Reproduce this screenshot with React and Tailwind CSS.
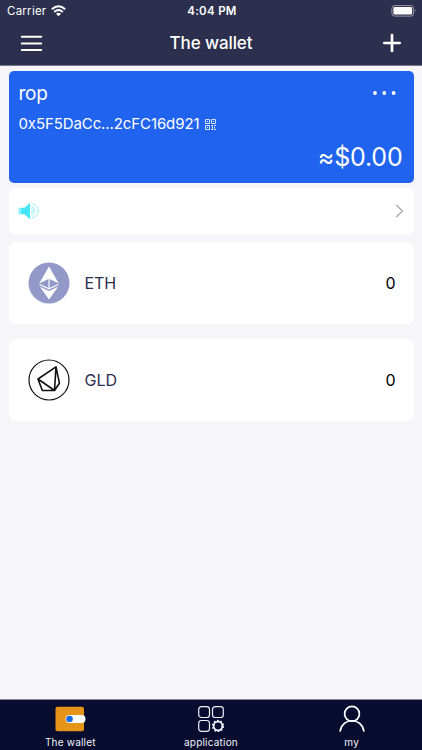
const EthIcon = () => (
  <svg width="42" height="42" viewBox="0 0 42 42">
    <circle cx="21" cy="21" r="20.5" fill="#9299c9" />
    <path d="M21 4.5 30.8 21.5 21 16.8 11.2 21.5Z" fill="#fff" />
    <path d="M13 22.2 21 18.2 29 22.2 21 25.8Z" fill="#9299c9" />
    <path d="M11.6 22.6 21 26.8 30.4 22.6" fill="none" stroke="#fff" strokeWidth="1.1" />
    <path d="M21 17V27" stroke="#fff" strokeWidth="1.1" />
    <path d="M11.8 24.8 21 29 30.2 24.8 21 37.5Z" fill="#fff" />
  </svg>
);

const GldIcon = () => (
  <svg width="42" height="42" viewBox="0 0 42 42" fill="none" stroke="#111" strokeLinejoin="round">
    <circle cx="21" cy="21" r="20" strokeWidth="1.2" />
    <path d="M10 20 28 7.8 31.4 24.2 26.5 31.5H14.3ZM10 20 26.5 31.5 28 7.8" strokeWidth="1.6" />
  </svg>
);

const SpeakerIcon = () => (
  <svg width="22" height="18" viewBox="0 0 22 18" fill="none">
    <path d="M0.5 5.8h2v6.4h-2z" fill="#7befff" />
    <path d="M2.8 5.8h3.7L12 .8v16.4L6.5 12.2H2.8Z" fill="#45e6fa" />
    <g stroke="#8ff1ff" strokeWidth="1">
      <path d="M13.5 6.5q2 2.5 0 5" />
      <path d="M13.5 4q6 5 0 10" />
      <path d="M13.5 1.7c9 1.8 9 12.8 0 14.6" />
    </g>
  </svg>
);

const QrIcon = () => (
  <svg className="mb-px" width="11" height="11" viewBox="0 0 11 11" fill="none" stroke="#d5e2ff" strokeWidth="1">
    <path d="M.5.5h4v4h-4zM6.5.5h4v4h-4zM.5 6.5h4v4h-4zM2 2.5h1M8 2.5h1M2 8.5h1M6 6.5h2M9 6.5h2M7.5 7v3M6 10.5h2M9.5 8v1.5M9 10.5h2" />
  </svg>
);

const AppsIcon = () => (
  <svg width="26" height="26" viewBox="0 0 26 26" fill="none" stroke="#eef0fa" strokeWidth="1.2">
    <rect x=".7" y=".7" width="10.8" height="10.8" rx="2.8" />
    <rect x="14.5" y=".7" width="10.8" height="10.8" rx="2.8" />
    <rect x=".7" y="14.5" width="10.8" height="10.8" rx="2.8" />
    <circle cx="20" cy="20" r="4.3" strokeWidth="1.8" />
    <circle cx="20" cy="20" r="5.5" strokeWidth="1.3" strokeDasharray="1.9 1.556" />
  </svg>
);

const Token = ({ icon, name }) => (
  <div className="flex h-[82px] items-center rounded-lg bg-white pl-[19px] pr-[18px]">
    {icon}
    <span className="ml-[15px] text-[16px] tracking-[-0.05px] text-[#2c2f4d]">{name}</span>
    <span className="ml-auto pt-px text-[16px] text-black">0</span>
  </div>
);

const Tab = ({ icon, label }) => (
  <div className="flex flex-1 flex-col items-center pt-[5px]">
    <div className="flex h-[28px] items-center">{icon}</div>
    <span className="mt-[2px] text-[10px] leading-[14px] tracking-[0.2px] text-[#f2f3fa]">{label}</span>
  </div>
);

export default function App() {
  return (
    <div className="flex h-[750px] w-[422px] flex-col overflow-hidden bg-[#f6f6fa] font-['Inter','Liberation_Sans',sans-serif]">
      <header className="h-[66px] shrink-0 border-b border-[#77788c] bg-[#2c2f4d] text-white">
        <div className="grid h-[22px] grid-cols-3 items-center pl-[7px] pr-[5px] text-[11.5px]">
          <div className="flex items-center gap-[5px] pt-px">
            <span className="tracking-[0.25px]">Carrier</span>
            <svg className="mb-px" width="15" height="12" viewBox="0 0 15 12" fill="none" stroke="#fff" strokeWidth="2">
              <path d="M.8 4.2Q7.5-1.8 14.2 4.2M3.2 6.9Q7.5 3.2 11.8 6.9" />
              <path d="M7.5 11.3 5 8.8q2.5-2 5 0Z" fill="#fff" stroke="none" />
            </svg>
          </div>
          <span className="pt-px text-center text-[11.5px] font-semibold tracking-[0.3px]">4:04 PM</span>
          <svg className="justify-self-end" width="26" height="12" viewBox="0 0 26 12">
            <rect x=".9" y=".6" width="21.7" height="10.5" rx="2.8" fill="none" stroke="#999bab" />
            <rect x="2.4" y="2.1" width="18.7" height="7.5" rx="1.4" fill="#fff" />
            <path d="M23.8 4q1.5 1.8 0 3.6Z" fill="#999bab" />
          </svg>
        </div>
        <div className="grid h-[42px] grid-cols-3 items-center pl-[20px] pr-[20px]">
          <svg width="23" height="17" viewBox="0 0 23 17" stroke="#fff" strokeWidth="2.1" strokeLinecap="round">
            <path d="M1.8 1.8H21.2M1.8 8.5H21.2M1.8 15H21.2" />
          </svg>
          <h1 className="pt-[2px] text-center text-[17px] font-medium tracking-[-0.1px]">The wallet</h1>
          <svg className="justify-self-end" width="20" height="20" viewBox="0 0 20 20" stroke="#fff" strokeWidth="2.7" strokeLinecap="round">
            <path d="M10 2V18M2.3 10H17.7" />
          </svg>
        </div>
      </header>

      <main className="flex flex-1 flex-col px-[8.5px] pt-[4.5px]">
        <section className="flex h-[112px] flex-col rounded-[5px] bg-[#2063ee] px-[10px] text-white">
          <div className="flex h-[45px] items-center justify-between pr-[8px]">
            <span className="pt-[3px] text-[19px] tracking-[-0.3px]">rop</span>
            <svg className="mb-px" width="24" height="6" viewBox="0 0 24 6" fill="#fff">
              <circle cx="3" cy="3" r="1.9" />
              <circle cx="12.3" cy="3" r="1.9" />
              <circle cx="21.6" cy="3" r="1.9" />
            </svg>
          </div>
          <div className="flex h-[18px] items-center gap-[6px]">
            <span className="text-[15px] tracking-[-0.1px]">0x5F5DaCc...2cFC16d921</span>
            <QrIcon />
          </div>
          <div className="mt-[7px] pr-px text-right text-[25px] leading-[32px] tracking-[-0.2px]">≈$0.00</div>
        </section>
        <section className="mt-[5.5px] flex h-[46px] items-center justify-between rounded-md bg-white pl-[9.5px] pr-[9.5px]">
          <SpeakerIcon />
          <svg width="9" height="14" viewBox="0 0 9 14" fill="none" stroke="#a0a1a8" strokeWidth="1.1">
            <path d="M1.2 1 7.5 7 1.2 13" />
          </svg>
        </section>
        <section className="mt-[7.5px] flex flex-col gap-[15px]">
          <Token icon={<EthIcon />} name="ETH" />
          <Token icon={<GldIcon />} name="GLD" />
        </section>
      </main>

      <nav className="flex h-[51px] shrink-0 border-t border-[#85869a] bg-[#080c2e]">
        <Tab
          label="The wallet"
          icon={
            <svg width="32" height="26" viewBox="0 0 32 26">
              <rect x="1.5" y=".8" width="28.5" height="24.5" rx="2" fill="#e69419" />
              <rect x="11.5" y="9" width="20" height="8" rx="4" fill="#fff" />
              <circle cx="15.5" cy="13" r="3.3" fill="#146be9" />
            </svg>
          }
        />
        <Tab label="application" icon={<AppsIcon />} />
        <Tab
          label="my"
          icon={
            <svg width="28" height="28" viewBox="0 0 28 28" fill="none" stroke="#fff" strokeWidth="1.7" strokeLinecap="round">
              <circle cx="14" cy="8.8" r="7.4" />
              <path d="M2.2 26C4 12.3 24 12.3 25.8 26" />
            </svg>
          }
        />
      </nav>
    </div>
  );
}
